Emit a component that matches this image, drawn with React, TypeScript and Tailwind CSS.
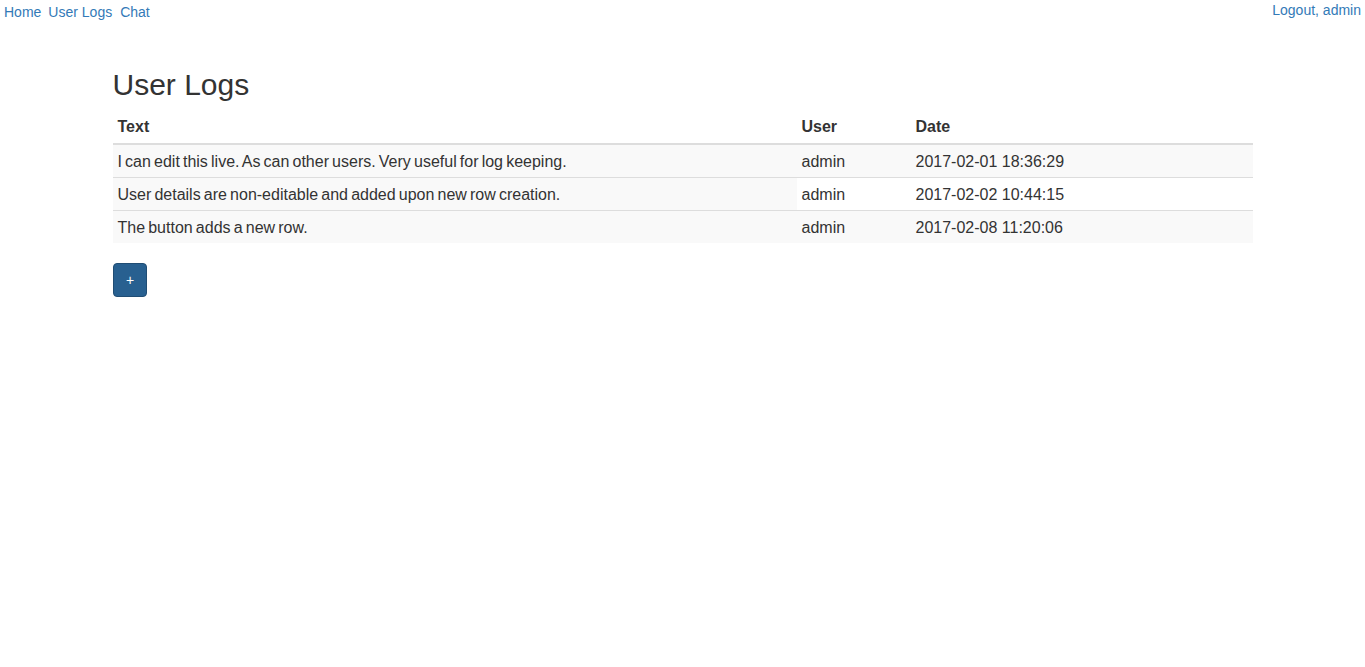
import { useState } from "react";

interface LogRow {
    text: string;
    user: string;
    date: string;
}

const initialRows: LogRow[] = [
    { text: "I can edit this live. As can other users. Very useful for log keeping.", user: "admin", date: "2017-02-01 18:36:29" },
    { text: "User details are non-editable and added upon new row creation.", user: "admin", date: "2017-02-02 10:44:15" },
    { text: "The button adds a new row.", user: "admin", date: "2017-02-08 11:20:06" },
];

function App() {
    const [rows, setRows] = useState<LogRow[]>(initialRows);

    const addRow = () => {
        setRows([...rows, { text: "", user: "admin", date: "" }]);
    };

    return (
        <div className="min-h-screen bg-white text-[#333] font-['Liberation_Sans',Arial,sans-serif]">
            <div className="flex justify-between h-[22px] text-[14px] leading-[20px] text-[#337ab7]">
                <div className="flex gap-[7px] pt-[2px] pl-1">
                    <a href="#">Home</a>
                    <a href="#">User Logs</a>
                    <a href="#" className="ml-px">Chat</a>
                </div>
                <div className="pr-[4px]">
                    <a href="#">Logout, admin</a>
                </div>
            </div>

            <div className="mx-auto w-[1140px] pt-[46px]">
                <h2 className="text-[30px] leading-[33px] font-normal mb-[10px]">User Logs</h2>
                <table className="w-full border-separate border-spacing-0 text-[16px] leading-[22px] mb-5">
                    <thead>
                        <tr>
                            <th className="w-[684px] text-left font-bold px-[5px] py-[5px] border-b-2 border-[#ddd]">Text</th>
                            <th className="w-[114px] text-left font-bold px-[5px] py-[5px] border-b-2 border-[#ddd]">User</th>
                            <th className="text-left font-bold px-[5px] py-[5px] border-b-2 border-[#ddd]">Date</th>
                        </tr>
                    </thead>
                    <tbody>
                        {rows.map((row, i) => (
                            <tr key={i} className={i % 2 === 0 ? "bg-[#f9f9f9]" : ""}>
                                <td className={"px-[5px] pt-[6px] pb-[4px] bg-[#f9f9f9] [word-spacing:-1.3px] " + (i > 0 ? "border-t border-[#ddd]" : "")}>
                                    {row.text}
                                </td>
                                <td className={"px-[5px] pt-[6px] pb-[4px] " + (i > 0 ? "border-t border-[#ddd]" : "")}>{row.user}</td>
                                <td className={"px-[5px] pt-[6px] pb-[4px] " + (i > 0 ? "border-t border-[#ddd]" : "")}>{row.date}</td>
                            </tr>
                        ))}
                    </tbody>
                </table>
                <button
                    onClick={addRow}
                    className="w-[34px] h-[34px] bg-[#286090] border border-[#204d74] rounded-[4px] text-white text-[14px] leading-[20px] pl-px"
                >
                    +
                </button>
            </div>
        </div>
    );
}

export default App;
